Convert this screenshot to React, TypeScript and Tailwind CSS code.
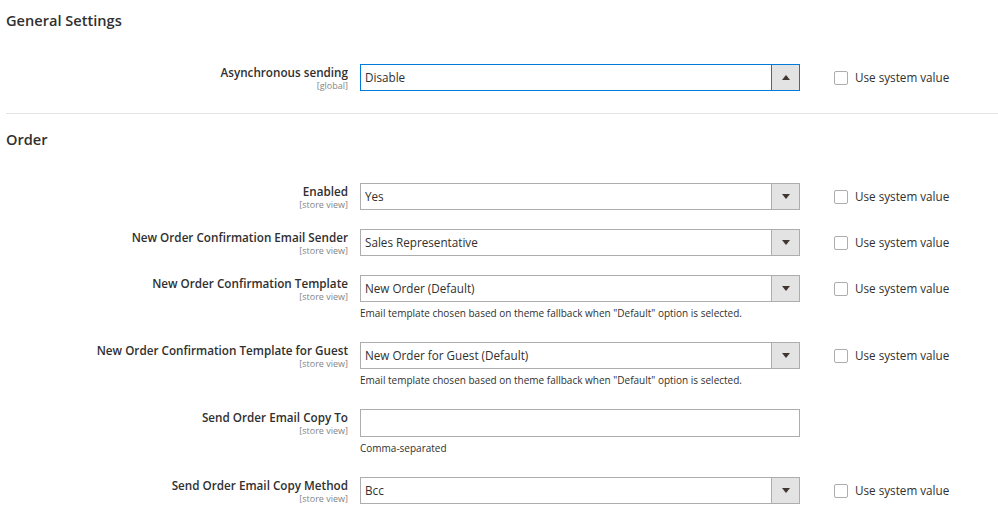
type Row = {
  label: string
  scope: string
  value?: string
  note?: string
  input?: boolean
  system?: boolean
  focused?: boolean
}

const general: Row[] = [
  { label: 'Asynchronous sending', scope: '[global]', value: 'Disable', system: true, focused: true },
]

const order: Row[] = [
  { label: 'Enabled', scope: '[store view]', value: 'Yes', system: true },
  { label: 'New Order Confirmation Email Sender', scope: '[store view]', value: 'Sales Representative', system: true },
  {
    label: 'New Order Confirmation Template',
    scope: '[store view]',
    value: 'New Order (Default)',
    note: 'Email template chosen based on theme fallback when "Default" option is selected.',
    system: true,
  },
  {
    label: 'New Order Confirmation Template for Guest',
    scope: '[store view]',
    value: 'New Order for Guest (Default)',
    note: 'Email template chosen based on theme fallback when "Default" option is selected.',
    system: true,
  },
  { label: 'Send Order Email Copy To', scope: '[store view]', input: true, note: 'Comma-separated' },
  { label: 'Send Order Email Copy Method', scope: '[store view]', value: 'Bcc', system: true },
]

function Field({ row }: { row: Row }) {
  return (
    <div className="flex items-start">
      <div className="w-[342px] shrink-0 text-right">
        <div className="text-[11.7px] leading-[14px] mt-[1px] font-semibold text-[#303030]">{row.label}</div>
        <div className="text-[9px] leading-[11px] mt-[1px] text-[#858585]">{row.scope}</div>
      </div>
      <div className="w-[440px] shrink-0 ml-[12px]">
        {row.input ? (
          <div className="h-[28px] border border-[#adadad] bg-white"></div>
        ) : (
          <div
            className={
              row.focused
                ? 'h-[27px] flex border border-[#007bdb] bg-white'
                : 'h-[27px] flex border border-[#adadad] bg-white'
            }
          >
            <div className="flex-1 pl-[4px] text-[11.7px] leading-[25px] text-[#303030]">{row.value}</div>
            <div
              className={
                row.focused
                  ? 'w-[28px] flex items-center justify-center bg-[#e3e3e3] border-l border-[#007bdb]'
                  : 'w-[28px] flex items-center justify-center bg-[#e3e3e3] border-l border-[#adadad]'
              }
            >
              <svg width="8" height="5" viewBox="0 0 8 5">
                {row.focused ? (
                  <path d="M0 5 L4 0 L8 5 Z" fill="#41362f" />
                ) : (
                  <path d="M0 0 L8 0 L4 5 Z" fill="#41362f" />
                )}
              </svg>
            </div>
          </div>
        )}
        {row.note && (
          <div className="text-[10px] leading-[15px] text-[#303030] mt-[4px] mb-[2px]">{row.note}</div>
        )}
      </div>
      {row.system && (
        <div className="flex items-center ml-[34px] h-[27px]">
          <div className="w-[14px] h-[14px] border border-[#adadad] rounded-[2px] bg-white"></div>
          <span className="ml-[7px] text-[11.7px] text-[#303030]">Use system value</span>
        </div>
      )}
    </div>
  )
}

export default function App() {
  return (
    <div className="w-[998px] h-[525px] overflow-hidden bg-white font-['Open_Sans',sans-serif] pl-[6px]">
      <h2 className="pt-[9px] text-[14.6px] leading-[22px] font-semibold text-[#303030]">General Settings</h2>
      <div className="mt-[33px]">
        {general.map((r) => (
          <Field key={r.label} row={r} />
        ))}
      </div>
      <div className="mt-[22px] border-t border-[#e3e3e3]"></div>
      <h2 className="mt-[14px] text-[14.6px] leading-[22px] font-semibold text-[#303030]">Order</h2>
      <div className="mt-[33px] flex flex-col gap-[19px]">
        {order.map((r) => (
          <Field key={r.label} row={r} />
        ))}
      </div>
    </div>
  )
}
